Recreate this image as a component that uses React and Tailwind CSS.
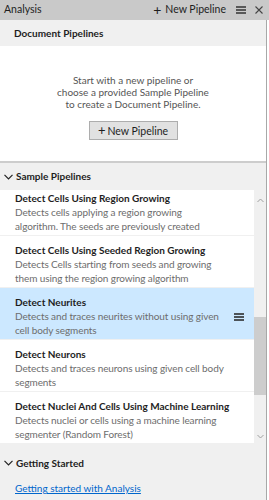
import React from "react";

const pipelines = [
  {
    title: "Detect Cells Using Region Growing",
    desc: "Detects cells applying a region growing algorithm. The seeds are previously created",
  },
  {
    title: "Detect Cells Using Seeded Region Growing",
    desc: "Detects Cells starting from seeds and growing them using the region growing algorithm",
  },
  {
    title: "Detect Neurites",
    desc: "Detects and traces neurites without using given cell body segments",
    selected: true,
  },
  {
    title: "Detect Neurons",
    desc: "Detects and traces neurons using given cell body segments",
  },
  {
    title: "Detect Nuclei And Cells Using Machine Learning",
    desc: "Detects nuclei or cells using a machine learning segmenter (Random Forest)",
  },
];

function Chevron() {
  return (
    <svg width="9" height="6" viewBox="0 0 9 6" className="shrink-0">
      <path d="M0.5 0.8 L4.5 4.8 L8.5 0.8" fill="none" stroke="#222" strokeWidth="1.2" />
    </svg>
  );
}

function Hamburger({ color = "#333" }) {
  return (
    <svg width="10" height="8" viewBox="0 0 10 8">
      <path d="M0 1 H10 M0 4 H10 M0 7 H10" stroke={color} strokeWidth="1.3" />
    </svg>
  );
}

export default function App() {
  return (
    <div
      className="w-[269px] h-[500px] bg-white text-[10px] text-[#1e1e1e] overflow-hidden flex flex-col"
      style={{ fontFamily: 'Lato, "Noto Sans", sans-serif' }}
    >
      {/* title bar */}
      <div className="h-5 shrink-0 bg-[#c9c9c9] flex items-center pl-1 pr-[6px] text-[10.5px]">
        <span>Analysis</span>
        <div className="ml-auto flex items-center">
          <span className="text-[14px] leading-none mr-[4px]">+</span>
          <span>New Pipeline</span>
          <span className="ml-[10px]">
            <Hamburger />
          </span>
          <svg width="8" height="8" viewBox="0 0 8 8" className="ml-[9px]">
            <path d="M0.5 0.5 L7.5 7.5 M7.5 0.5 L0.5 7.5" stroke="#444" strokeWidth="1.1" />
          </svg>
        </div>
      </div>

      <div className="flex-1 flex flex-col w-[267px] border-r border-[#a8a8a8] min-h-0">
        {/* document pipelines */}
        <div className="h-[26px] shrink-0 bg-[#f0f0f0] flex items-center pl-[14px] font-bold">
          Document Pipelines
        </div>
        <div className="h-[115px] shrink-0 flex flex-col items-center pt-[28px] text-[#555] leading-[12px] text-center">
          <p>Start with a new pipeline or</p>
          <p>choose a provided Sample Pipeline</p>
          <p>to create a Document Pipeline.</p>
          <button className="mt-[11px] w-[89px] h-[19px] bg-[#e1e1e1] border border-[#adadad] text-[#1e1e1e] flex items-center justify-center text-[10.5px]">
            <span className="text-[13px] leading-none mr-[2px]">+</span>New Pipeline
          </button>
        </div>

        {/* sample pipelines */}
        <div className="h-[29px] shrink-0 bg-[#f0f0f0] border-t-2 border-[#cdcdcd] flex items-center pl-[4px] gap-[3px] font-bold">
          <Chevron />
          <span>Sample Pipelines</span>
        </div>
        <div className="h-[257px] shrink-0 flex bg-[#f0f0f0]">
          <div className="flex-1 overflow-hidden">
            <div className="-mt-[6px] flex flex-col gap-px">
              {pipelines.map((p) => (
                <div
                  key={p.title}
                  className={
                    "h-[51px] shrink-0 flex items-start pl-[15px] pr-2 pt-[7px] leading-[14px] " +
                    (p.selected ? "bg-[#cce8ff]" : "bg-white")
                  }
                >
                  <div className="flex-1 min-w-0">
                    <div className="font-bold whitespace-nowrap">{p.title}</div>
                    <div className="text-[#6d6d6d] max-w-[211px] tracking-[-0.1px]">{p.desc}</div>
                  </div>
                  {p.selected && (
                    <div className="mt-[18px] mr-[2px]">
                      <Hamburger color="#222" />
                    </div>
                  )}
                </div>
              ))}
            </div>
          </div>
          {/* scrollbar */}
          <div className="w-[12px] shrink-0 bg-[#f0f0f0] flex flex-col items-center">
            <svg width="7" height="5" viewBox="0 0 7 5" className="mt-[8px]">
              <path d="M0.5 4 L3.5 1 L6.5 4" fill="none" stroke="#a0a0a0" strokeWidth="1" />
            </svg>
            <div className="mt-[114px] w-full h-[78px] bg-[#cdcdcd]" />
            <svg width="7" height="5" viewBox="0 0 7 5" className="mt-auto mb-[8px]">
              <path d="M0.5 1 L3.5 4 L6.5 1" fill="none" stroke="#a0a0a0" strokeWidth="1" />
            </svg>
          </div>
        </div>

        {/* getting started */}
        <div className="flex-1 bg-[#f0f0f0] flex flex-col">
          <div className="h-[32px] flex items-center pl-[4px] gap-[3px] font-bold">
            <Chevron />
            <span>Getting Started</span>
          </div>
          <a href="#" className="ml-[15px] mt-[2px] text-[#0066cc] underline leading-[14px]">
            Getting started with Analysis
          </a>
        </div>
      </div>
    </div>
  );
}
